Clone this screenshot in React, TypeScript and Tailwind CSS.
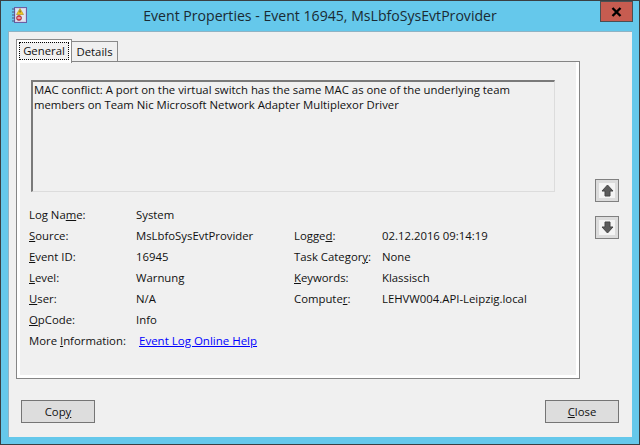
const font = { fontFamily: '"Open Sans", "Noto Sans", sans-serif' };

function Field({ label, value }: { label: React.ReactNode; value: string }) {
  return (
    <>
      <div>{label}</div>
      <div>{value}</div>
    </>
  );
}

function LogIcon() {
  return (
    <svg width="15" height="16" viewBox="0 0 15 16" className="block">
      <rect x="2.5" y="0.5" width="12" height="15" fill="#d4d0e6" stroke="#6a5fa5" />
      <rect x="4" y="2" width="9" height="12" fill="#dfe4f2" />
      <path d="M0 2h3M0 5h3M0 8h3M0 11h3M0 14h3" stroke="#55527f" strokeWidth="1" />
      <path d="M8 1.5l3.5 6h-7z" fill="#f2c81f" stroke="#a98a12" strokeWidth="0.6" />
      <rect x="7.6" y="3.5" width="0.9" height="2" fill="#333" />
      <circle cx="7" cy="11" r="2.5" fill="#d8404a" stroke="#8e2029" strokeWidth="0.6" />
      <rect x="5.5" y="10.5" width="3" height="1" fill="#fff" />
    </svg>
  );
}

function ArrowButton({ down }: { down?: boolean }) {
  return (
    <div className="flex h-[23px] w-[24px] items-center justify-center border border-[#808080] bg-[#dcdcdc] p-[3px]">
      <div className="flex h-full w-full items-center justify-center bg-[#f4f4f4]">
        <svg width="13" height="13" viewBox="0 0 13 13" className={down ? "rotate-180" : ""}>
          <path d="M6.5 1L12 7H9v5H4V7H1z" fill="#5c5c5c" stroke="#474747" strokeWidth="1" />
        </svg>
      </div>
    </div>
  );
}

export default function App() {
  return (
    <div
      style={font}
      className="flex h-[445px] w-[640px] flex-col overflow-hidden border border-[#3a3f42] bg-[#65c8eb] text-[11.35px] leading-[16px] text-[#111]"
    >
      <div className="flex h-[30px] shrink-0">
        <div className="w-[599px] pl-[11px] pt-[6px]">
          <LogIcon />
        </div>
        <div className="flex h-[21px] w-[33px] items-center justify-center border border-[#4b4f52] bg-[#c75c50]">
          <svg width="11" height="10" viewBox="0 0 11 10">
            <path d="M1.5 1l8 8M9.5 1l-8 8" stroke="#000" strokeWidth="2.4" />
          </svg>
        </div>
      </div>
      <div className="-mt-[30px] h-[30px] shrink-0 pointer-events-none flex justify-center pt-[5px] text-[14.1px] leading-[20px] text-[#1a2a33]">
        Event Properties - Event 16945, MsLbfoSysEvtProvider
      </div>

      <div className="mx-[7px] flex h-[406px] flex-col border-t border-l border-[#8fb3c4] bg-[#f0f0f0] pl-[7px] pr-[6px]">
        <div className="flex h-[348px] shrink-0 pt-[7px]">
          <div className="flex w-[564px] flex-col">
            <div className="flex h-[22px] items-end">
              <div className="z-10 -mb-[2px] flex h-[24px] w-[56px] items-start border border-b-0 border-[#8a8a8a] bg-white px-[2px] pt-[2px]">
                <div className="h-[18px] w-full border border-dotted border-black bg-[#f0f0f0] text-center leading-[15px]">
                  General
                </div>
              </div>
              <div className="flex h-[20px] w-[46px] items-center justify-center border border-b-0 border-l-0 border-[#8a8a8a] bg-[#f0f0f0]">
                Details
              </div>
            </div>
            <div className="h-[318px] border border-[#858585] bg-white px-[3px] pb-[3px]">
              <div className="h-full bg-[#f0f0f0] px-[11px] pt-[18px]">
                <div className="h-[112px] w-[524px] border-2 border-b border-r border-[#7a7a7a] border-b-[#dcdcdc] border-r-[#dcdcdc] px-[1px] leading-[15px]">
                  MAC conflict: A port on the virtual switch has the same MAC as one of the underlying team members on Team Nic Microsoft Network Adapter Multiplexor Driver
                </div>
                <div className="-ml-[2px] mt-[15px] grid grid-cols-[107px_158px_88px_1fr] auto-rows-[21px] items-start">
                  <Field label={<>Log Na<u>m</u>e:</>} value="System" />
                  <div />
                  <div />
                  <Field label={<><u>S</u>ource:</>} value="MsLbfoSysEvtProvider" />
                  <Field label={<>Logge<u>d</u>:</>} value="02.12.2016 09:14:19" />
                  <Field label={<><u>E</u>vent ID:</>} value="16945" />
                  <Field label={<>Task Categor<u>y</u>:</>} value="None" />
                  <Field label={<><u>L</u>evel:</>} value="Warnung" />
                  <Field label={<><u>K</u>eywords:</>} value="Klassisch" />
                  <Field label={<><u>U</u>ser:</>} value="N/A" />
                  <Field label={<>Compute<u>r</u>:</>} value="LEHVW004.API-Leipzig.local" />
                  <Field label={<><u>O</u>pCode:</>} value="Info" />
                  <div />
                  <div />
                  <div className="col-span-4 flex">
                    <span className="w-[110px]">More <u>I</u>nformation:</span>
                    <a className="text-[11.5px] text-[#0000ff] underline">Event Log Online Help</a>
                  </div>
                </div>
              </div>
            </div>
          </div>
          <div className="flex flex-1 flex-col items-start gap-[14px] pl-[15px] pt-[140px]">
            <ArrowButton />
            <ArrowButton down />
          </div>
        </div>
        <div className="flex justify-between pl-[5px] pr-[7px] pt-[20px]">
          <div className="flex h-[23px] w-[74px] items-center justify-center border border-[#757575] bg-[#dddddd]">
            <span>Cop<u>y</u></span>
          </div>
          <div className="flex h-[23px] w-[74px] items-center justify-center border border-[#757575] bg-[#dddddd]">
            <span><u>C</u>lose</span>
          </div>
        </div>
      </div>
    </div>
  );
}
